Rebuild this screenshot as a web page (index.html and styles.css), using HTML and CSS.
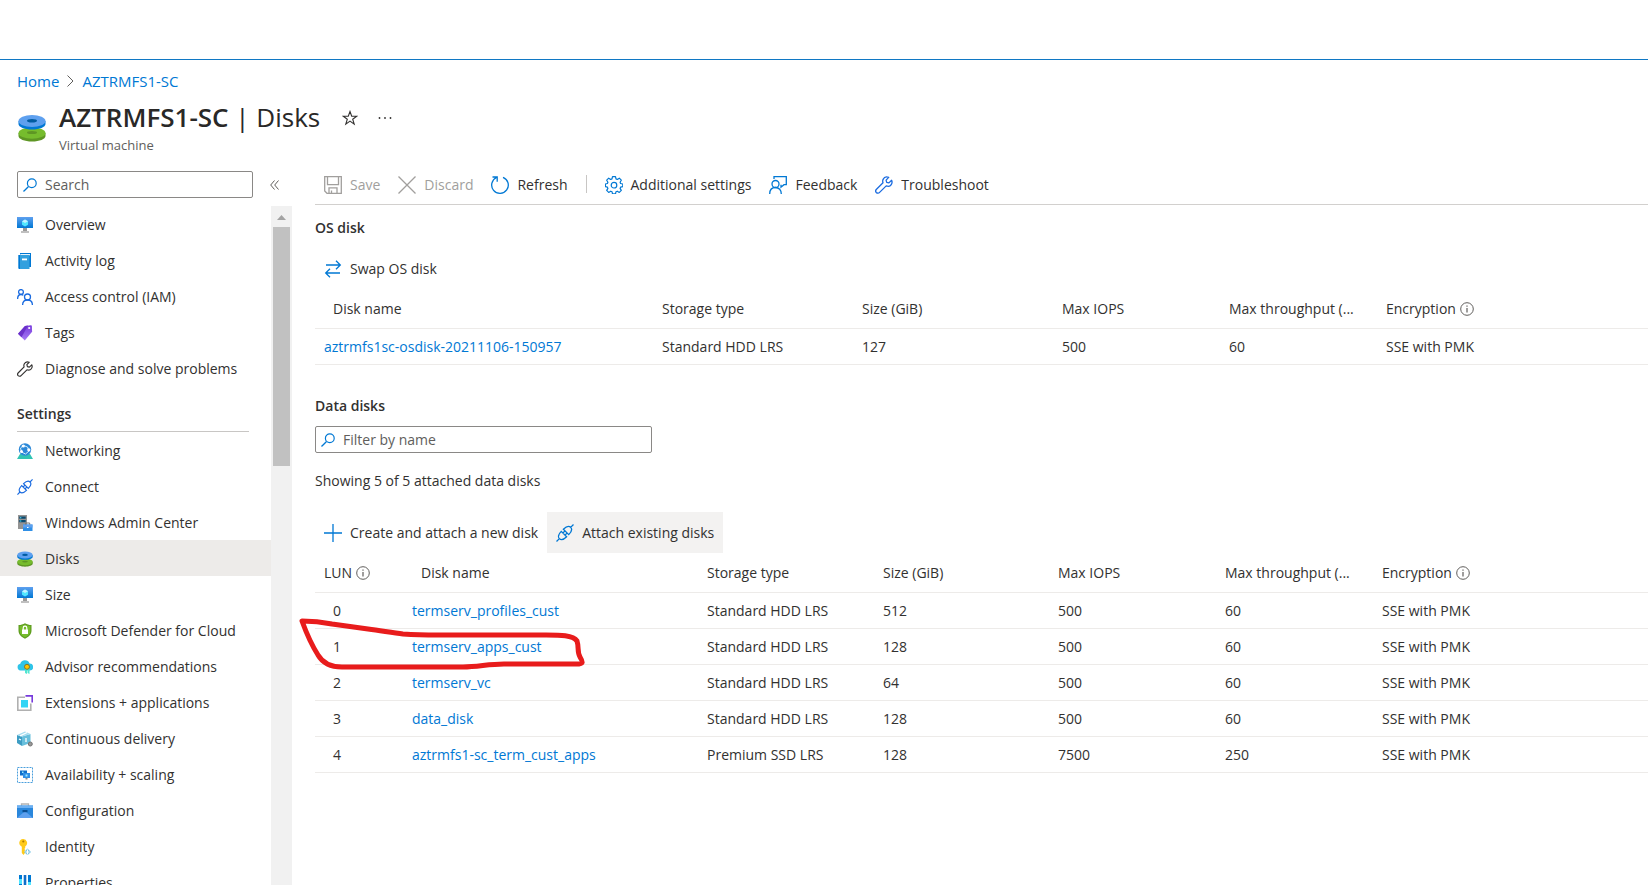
FILE: index.html
```html
<!DOCTYPE html>
<html lang="en">
<head>
  <meta charset="UTF-8">
  <meta name="viewport" content="width=device-width, initial-scale=1.0">
  <title>AZTRMFS1-SC | Disks</title>
  <link rel="stylesheet" href="styles.css">
</head>
<body>

  <!-- Shared icons -->
  <svg class="sprite" aria-hidden="true">
    <defs>
      <linearGradient id="screen" x1="0" y1="0" x2="0" y2="1">
        <stop offset="0" stop-color="#5ea0ef"/>
        <stop offset="1" stop-color="#0078d4"/>
      </linearGradient>
      <linearGradient id="purple" x1="0" y1="0" x2="0" y2="1">
        <stop offset="0" stop-color="#773adc"/>
        <stop offset="1" stop-color="#a67af4"/>
      </linearGradient>
    </defs>
    <symbol id="i-disks" viewBox="0 0 28 28">
      <path d="M0.500 19v3c0 3 6 5.500 13.500 5.500S27.500 25 27.500 22v-3z" fill="#5e9624"/>
      <ellipse cx="14" cy="19" rx="13.500" ry="5.800" fill="#76bc2d"/>
      <ellipse cx="14" cy="18.500" rx="5" ry="1.500" fill="#5e9624"/>
      <path d="M0.500 7v3c0 3 6 5.500 13.500 5.500S27.500 13 27.500 10V7z" fill="#0078d4"/>
      <ellipse cx="14" cy="7" rx="13.500" ry="6" fill="#5ea0ef"/>
      <ellipse cx="14" cy="6.800" rx="5" ry="1.800" fill="#005ba1"/>
    </symbol>
    <symbol id="i-vm" viewBox="0 0 16 16">
      <path d="M0 0h16v11H0z" fill="url(#screen)"/>
      <path d="M6 11h4v3H6z" fill="#999"/>
      <path d="M4 14h8v2H4z" fill="#c0c0c0"/>
      <path d="M8 2.500l3 1.700v3.600L8 9.500 5 7.800V4.200z" fill="#50e6ff"/>
      <path d="M8 2.500l3 1.700L8 6 5 4.200z" fill="#c3f1ff"/>
    </symbol>
    <symbol id="i-wrench" viewBox="0 0 18 18">
      <path d="M16.600 4.300l-2.700 2.600-2.200-.6-.6-2.200 2.600-2.700c-2.200-.9-4.600-.1-5.600 2-.5 1.100-.5 2.300-.1 3.300L1.500 13.200c-1 1-1 2.400-.2 3.300.9.9 2.400.9 3.300-.1l6.600-6.500c2.200.8 4.600 0 5.500-2.200.5-1.100.4-2.400-.1-3.400z" fill="none" stroke="currentColor" stroke-width="1.300" stroke-linejoin="round"/>
    </symbol>
    <symbol id="i-plug" viewBox="0 0 18 18">
      <path transform="rotate(-45 9 9)" d="M-3 9h4M17 9h4M7.500 5.200C3.500 5.200 1 6.800 1 9s2.500 3.800 6.500 3.800zM10.500 5.200C14.500 5.200 17 6.800 17 9s-2.500 3.800-6.500 3.800zM7.500 7.500h3M7.500 10.500h3" fill="none" stroke="currentColor" stroke-width="1.300"/>
    </symbol>
    <symbol id="i-search" viewBox="0 0 14 14">
      <path d="M0.500 13.500L5.300 8.700" fill="none" stroke="currentColor" stroke-width="1.300"/>
      <circle cx="8.800" cy="5.200" r="4.400" fill="none" stroke="currentColor" stroke-width="1.200"/>
    </symbol>
    <symbol id="i-info" viewBox="0 0 14 14">
      <circle cx="7" cy="7" r="6.300" fill="none" stroke="currentColor"/>
      <path d="M7 6v4.500M7 3.500v1.300" fill="none" stroke="currentColor" stroke-width="1.200"/>
    </symbol>
  </svg>

  <div class="topbar"></div>

  <nav class="breadcrumb" aria-label="Breadcrumb">
    <a href="#">Home</a>
    <svg width="7" height="12" viewBox="0 0 7 12" fill="none" stroke="#605e5c"><path d="M.5.500L6 6 .5 11.500"/></svg>
    <a href="#">AZTRMFS1-SC</a>
  </nav>

  <header class="page-header">
    <svg class="page-icon"><use href="#i-disks"/></svg>
    <div>
      <div class="title-row">
        <h1>AZTRMFS1-SC <span>| Disks</span></h1>
        <button class="icon-btn" aria-label="Favorite">
          <svg width="16" height="16" viewBox="0 0 16 16" fill="none" stroke="#323130" stroke-width="1.100"><path d="M8 1.500l1.700 4.700h5L10.700 9.200l1.500 4.900L8 11.100l-4.200 3 1.500-4.900-4-3h5z"/></svg>
        </button>
        <button class="icon-btn" aria-label="More">
          <svg width="14" height="4" viewBox="0 0 14 4" fill="#323130"><circle cx="1.500" cy="2" r=".9"/><circle cx="7" cy="2" r=".9"/><circle cx="12.500" cy="2" r=".9"/></svg>
        </button>
      </div>
      <p class="subtitle">Virtual machine</p>
    </div>
  </header>

  <div class="layout">
    <aside class="sidebar">
      <div class="sidebar-top">
        <label class="search-box">
          <svg width="14" height="14"><use href="#i-search"/></svg>
          <input type="text" placeholder="Search" aria-label="Search">
        </label>
        <button class="icon-btn" aria-label="Collapse menu">
          <svg width="9" height="10" viewBox="0 0 9 10" fill="none" stroke="#605e5c"><path d="M4.500.5L.7 5l3.800 4.500M8.500.5L4.700 5l3.800 4.500"/></svg>
        </button>
      </div>

      <div class="menu-wrap">
        <nav class="menu" aria-label="Resource menu">
          <a href="#"><svg><use href="#i-vm"/></svg>Overview</a>
          <a href="#">
            <svg viewBox="0 0 16 16"><path d="M3 0h11v14H3z" fill="#0078d4"/><path d="M3.500 1H13v1.500H3z" fill="#e6f3fb"/><path d="M1.500 2h11v14h-10a1 1 0 0 1-1-1z" fill="#32a0de"/><path d="M1.500 2h1.500v14h-.5a1 1 0 0 1-1-1z" fill="#0078d4"/><path d="M5 5.500h5v1.800H5z" fill="#fff"/></svg>
            Activity log
          </a>
          <a href="#">
            <svg viewBox="0 0 16 16" fill="none" stroke="#1a6be0" stroke-width="1.300"><circle cx="4" cy="3" r="2.400"/><path d="M.6 10c0-2.500 1.200-4.500 3.400-4.500 1 0 1.700.3 2.300.9"/><circle cx="10.500" cy="8" r="3"/><path d="M5.600 16c0-3 2-5 4.900-5s4.900 2 4.900 5"/></svg>
            Access control (IAM)
          </a>
          <a href="#">
            <svg viewBox="0 0 16 16"><path d="M8 1l6-.8.800.6.300 6L7.800 15.600 1 8.800z" fill="url(#purple)"/><path d="M8 1l3-.4L4.500 12.300 1 8.800z" fill="#6a30c9"/><circle cx="12.200" cy="3" r="1.100" fill="#fff"/></svg>
            Tags
          </a>
          <a href="#"><svg><use href="#i-wrench"/></svg>Diagnose and solve problems</a>

          <h2 class="menu-heading">Settings</h2>

          <a href="#">
            <svg viewBox="0 0 16 16"><path d="M3 11h10l3 5H0z" fill="#31c4b3"/><circle cx="8" cy="6.500" r="6.200" fill="#2b88d8"/><path d="M3.500 5l3-2.500 4 1.500 1.500 4-3.500 3-4-2z" fill="none" stroke="#d3eefc"/><circle cx="6.300" cy="3" r="1.600" fill="#fff"/><circle cx="11.800" cy="6.800" r="1.600" fill="#fff"/><circle cx="4.500" cy="8.500" r="1.500" fill="#fff"/></svg>
            Networking
          </a>
          <a href="#"><svg class="blue"><use href="#i-plug"/></svg>Connect</a>
          <a href="#">
            <svg viewBox="0 0 16 16"><path d="M1 0h9v14H1z" fill="#949494"/><path d="M2.300 1.500h6.400v2.200H2.300zM2.300 5h6.400v2.200H2.300z" fill="#0b4a70"/><path d="M3 2.200h1.300v1H3zM3 5.600h1.300v1H3z" fill="#50e6ff"/><path d="M6 9.500h9.500V16H6z" fill="#2f8fe6"/><path d="M6 9.500h9.500v3H6z" fill="#5ea0ef"/><path d="M8.700 9.500V8h4v1.500" fill="none" stroke="#777"/><path d="M10 12h1.500v1H10z" fill="#fff"/></svg>
            Windows Admin Center
          </a>
          <a href="#" class="active" aria-current="page"><svg><use href="#i-disks"/></svg>Disks</a>
          <a href="#"><svg><use href="#i-vm"/></svg>Size</a>
          <a href="#">
            <svg viewBox="0 0 16 16"><path d="M8 .2c2 1.300 4 1.700 6.500 1.800v5.500c0 4-3 6.500-6.500 8.300C4.500 14 1.500 11.500 1.500 7.500V2C4 1.900 6 1.500 8 .2z" fill="#5e9c1e"/><path d="M8 1.500c1.700 1 3.500 1.400 5.300 1.600v4.600c0 3.200-2.400 5.300-5.300 6.900-2.900-1.600-5.300-3.700-5.300-6.900V3.100C4.500 2.900 6.300 2.500 8 1.500z" fill="#76bc2d"/><path d="M5 6.500h6V11H5z" fill="#fff"/><path d="M6.200 7V5a1.800 1.800 0 0 1 3.600 0v2" fill="none" stroke="#fff" stroke-width="1.200"/></svg>
            Microsoft Defender for Cloud
          </a>
          <a href="#">
            <svg viewBox="0 0 16 16"><path d="M3.500 11.500A3.400 3.400 0 0 1 3.300 4.800 4.800 4.800 0 0 1 12.500 4.500a3.500 3.500 0 0 1 .3 7z" fill="#2fc4e8"/><path d="M8 9.500h2V15l-2-1zM10.500 9.500h2V15l-2-1z" fill="#50e6d0"/><circle cx="10" cy="7.800" r="2.500" fill="#fbc400" stroke="#806a20" stroke-width=".9"/></svg>
            Advisor recommendations
          </a>
          <a href="#">
            <svg viewBox="0 0 16 16"><path d="M8 2.200H.8v13h13V8.500" fill="none" stroke="#b0b0b0" stroke-width="1.600"/><path d="M4 5h7v7.500H4z" fill="#32d4f5"/><path d="M8.500.9h6.700v6.600" fill="none" stroke="#773adc" stroke-width="1.600"/></svg>
            Extensions + applications
          </a>
          <a href="#">
            <svg viewBox="0 0 16 16"><path d="M0 4l5 1.500V15L0 12z" fill="#3d9dc4"/><path d="M5 5.500L13.500 3v9L5 15z" fill="#67bfdc"/><path d="M0 4l8-3.500L13.500 3 5 5.500z" fill="#a5dcef"/><path d="M3 4.800L10 1.500M2 8l2 1M9 7v4" stroke="#fff" stroke-width="1.300"/><circle cx="13.300" cy="13" r="2" fill="#999" stroke="#737373"/></svg>
            Continuous delivery
          </a>
          <a href="#">
            <svg viewBox="0 0 16 16"><path d="M.5.500h15v15H.5z" fill="none" stroke="#4a9fdc" stroke-dasharray="2 1"/><path d="M3 3.500h7v5H3z" fill="#0f6fca"/><path d="M6 6h7v5H6z" fill="#2f8fe6"/><path d="M8.500 11h2v1.500h-2z" fill="#888"/><path d="M8.500 7.500h2v2h-2zM5 4.500h1.500v1.500H5z" fill="#9cebff"/></svg>
            Availability + scaling
          </a>
          <a href="#">
            <svg viewBox="0 0 16 16"><path d="M4.500 3V1h7v2" fill="none" stroke="#b3b3b3" stroke-width="1.300"/><path d="M0 2.500h16V15H0z" fill="#2a87dc"/><path d="M0 2.500h16V5H0z" fill="#6cb0f2"/><path d="M0 15l7-6h2l7 6z" fill="#5ea0ef"/><path d="M5.500 7h5v2.200h-5z" fill="#0b4f94"/></svg>
            Configuration
          </a>
          <a href="#">
            <svg viewBox="0 0 16 16"><path d="M6 0a4 4 0 0 1 2.200 7.400V9L7.300 10l1 1-1 1.200 1 1.300L6.500 16 4.800 14V7.700A4 4 0 0 1 6 0z" fill="#ffca1a"/><circle cx="6.300" cy="2.500" r="1.100" fill="#b07c00"/><path d="M10.500 9.500L14 13l-3.500 3.200L7 13z" fill="#7cc6e4"/><path d="M10.500 10.500v5M8.500 13h4" stroke="#fff"/></svg>
            Identity
          </a>
          <a href="#">
            <svg viewBox="0 0 16 16"><path d="M2 0h3v4H2zM2 9h3v7H2zM11 0h3v7h-3zM11 11h3v5h-3z" fill="#0078d4"/><path d="M2 4h3v5H2zM11 7h3v4h-3z" fill="#50e6ff"/><path d="M6.700 0h2.600v16H6.700z" fill="#0f6fca"/></svg>
            Properties
          </a>
        </nav>
        <div class="scrollbar" aria-hidden="true">
          <svg width="9" height="5" viewBox="0 0 9 5"><path d="M0 5L4.500 0 9 5z" fill="#a3a3a3"/></svg>
          <div class="scroll-thumb"></div>
        </div>
      </div>
    </aside>

    <main class="content">
      <div class="toolbar">
        <button disabled>
          <svg viewBox="0 0 18 18" fill="none" stroke="currentColor" stroke-width="1.300"><path d="M.7.700h16.600v16.600H3L.7 15zM3.500.7v8h11v-8M5 17.300v-5.500h8v5.500M7.500 17v-2.500"/></svg>
          Save
        </button>
        <button disabled>
          <svg viewBox="0 0 18 18" fill="none" stroke="currentColor" stroke-width="1.300"><path d="M.5.500l17 17M17.500.500l-17 17"/></svg>
          Discard
        </button>
        <button>
          <svg class="azure" viewBox="0 0 18 18" fill="none" stroke="currentColor" stroke-width="1.300"><path d="M12 1.300a8.300 8.300 0 1 1-6.500.2M1.500 1h4.700v4.700"/></svg>
          Refresh
        </button>
        <span class="divider"></span>
        <button>
          <svg class="azure" viewBox="0 0 18 18" fill="none" stroke="currentColor" stroke-width="1.200" stroke-linejoin="round"><path d="M7.500.7h3l.5 2.200 1.300.6 2-1.300 2 2-1.200 2 .5 1.300 2.200.5v2.600l-2.200.5-.5 1.300 1.200 2-2 2-2-1.200-1.300.5-.5 2.200h-3L7 15.700l-1.300-.5-2 1.200-2-2 1.200-2-.5-1.300-2-.5V8l2-.5.5-1.300-1.200-2 2-2 2 1.300L7 2.900z"/><circle cx="9" cy="9.200" r="2.800"/></svg>
          Additional settings
        </button>
        <button>
          <svg class="azure" viewBox="0 0 18 18" fill="none" stroke="currentColor" stroke-width="1.300"><path d="M5 3V.7h12.300v8H15l-3 2.500V8.700"/><circle cx="6.500" cy="8" r="3.500"/><path d="M.7 18c0-4 2.300-6.500 5.800-6.500s5.800 2.500 5.800 6.500"/></svg>
          Feedback
        </button>
        <button><svg class="blue"><use href="#i-wrench"/></svg>Troubleshoot</button>
      </div>

      <h2>OS disk</h2>
      <div class="commands">
        <button>
          <svg class="azure" viewBox="0 0 18 18" fill="none" stroke="currentColor" stroke-width="1.300"><path d="M2 5h14M12 .8L16.300 5 12 9.200M16 13H2M6 8.800L1.700 13 6 17.200"/></svg>
          Swap OS disk
        </button>
      </div>
      <table class="disks">
        <colgroup>
          <col class="w-os-name"><col class="w-os-type"><col class="w-os-size"><col class="w-iops"><col class="w-throughput"><col>
        </colgroup>
        <thead>
          <tr>
            <th class="indent">Disk name</th>
            <th>Storage type</th>
            <th>Size (GiB)</th>
            <th>Max IOPS</th>
            <th>Max throughput (...</th>
            <th>Encryption <svg class="info"><use href="#i-info"/></svg></th>
          </tr>
        </thead>
        <tbody>
          <tr><td><a href="#">aztrmfs1sc-osdisk-20211106-150957</a></td><td>Standard HDD LRS</td><td>127</td><td>500</td><td>60</td><td>SSE with PMK</td></tr>
        </tbody>
      </table>

      <h2 class="data-heading">Data disks</h2>
      <label class="search-box filter">
        <svg width="14" height="14"><use href="#i-search"/></svg>
        <input type="text" placeholder="Filter by name" aria-label="Filter by name">
      </label>
      <p class="showing">Showing 5 of 5 attached data disks</p>
      <div class="commands">
        <button>
          <svg class="azure" viewBox="0 0 18 18" fill="none" stroke="currentColor" stroke-width="1.300"><path d="M9 0v18M0 9h18"/></svg>
          Create and attach a new disk
        </button>
        <button class="hovered"><svg class="azure"><use href="#i-plug"/></svg>Attach existing disks</button>
      </div>
      <div class="table-wrap">
        <table class="disks">
          <colgroup>
            <col class="w-lun"><col class="w-name"><col class="w-type"><col class="w-size"><col class="w-iops"><col class="w-throughput"><col>
          </colgroup>
          <thead>
            <tr>
              <th>LUN <svg class="info"><use href="#i-info"/></svg></th>
              <th class="indent">Disk name</th>
              <th>Storage type</th>
              <th>Size (GiB)</th>
              <th>Max IOPS</th>
              <th>Max throughput (...</th>
              <th>Encryption <svg class="info"><use href="#i-info"/></svg></th>
            </tr>
          </thead>
          <tbody>
            <tr><td class="indent">0</td><td><a href="#">termserv_profiles_cust</a></td><td>Standard HDD LRS</td><td>512</td><td>500</td><td>60</td><td>SSE with PMK</td></tr>
            <tr><td class="indent">1</td><td><a href="#">termserv_apps_cust</a></td><td>Standard HDD LRS</td><td>128</td><td>500</td><td>60</td><td>SSE with PMK</td></tr>
            <tr><td class="indent">2</td><td><a href="#">termserv_vc</a></td><td>Standard HDD LRS</td><td>64</td><td>500</td><td>60</td><td>SSE with PMK</td></tr>
            <tr><td class="indent">3</td><td><a href="#">data_disk</a></td><td>Standard HDD LRS</td><td>128</td><td>500</td><td>60</td><td>SSE with PMK</td></tr>
            <tr><td class="indent">4</td><td><a href="#">aztrmfs1-sc_term_cust_apps</a></td><td>Premium SSD LRS</td><td>128</td><td>7500</td><td>250</td><td>SSE with PMK</td></tr>
          </tbody>
        </table>
        <!-- Red pen mark around LUN 1 -->
        <svg class="pen-mark" viewBox="0 0 290 56" fill="none" stroke="#e81c1c" stroke-width="5" stroke-linecap="round" stroke-linejoin="round">
          <path d="M4 5C14 5 24 6 34 8L70 13C85 15 95 17 105 18C120 19 130 19 140 19H248C262 19 275 19 279 25C281 31 279 36 282 41C285 46 286 48 278 48H206C190 48 180 51 165 51H44C32 51 24 46 20 39C13 28 8 16 4 5Z"/>
        </svg>
      </div>
    </main>
  </div>

</body>
</html>
```

FILE: styles.css
```css
* {
  box-sizing: border-box;
}
body {
  margin: 0;
  height: 100vh;
  display: flex;
  flex-direction: column;
  overflow: hidden;
  background: #fff;
  color: #323130;
  font-family: "Segoe UI", "Open Sans", "Noto Sans", sans-serif;
  font-size: 14px;
  line-height: 20px;
}
h1, h2, p {
  margin: 0;
}
a {
  color: #0078d4;
  text-decoration: none;
}
button {
  border: 0;
  background: none;
  color: inherit;
  font: inherit;
  cursor: pointer;
}
.sprite {
  position: absolute;
  width: 0;
  height: 0;
}
.azure {
  color: #0078d4;
}
.blue {
  color: #1a6be0;
}

/* Header */
.topbar {
  flex: none;
  height: 60px;
  border-bottom: 1px solid #1078c4;
}
.breadcrumb {
  display: flex;
  align-items: center;
  gap: 8px;
  padding: 11px 17px 9px;
  font-size: 15px;
}
.page-header {
  display: flex;
  align-items: center;
  gap: 13px;
  padding: 0 18px 9px;
}
.page-icon {
  width: 28px;
  height: 28px;
}
.title-row {
  display: flex;
  align-items: center;
  gap: 20px;
}
h1 {
  margin-right: 2px;
  color: #292827;
  font-size: 26px;
  font-weight: 600;
  line-height: 35px;
}
h1 span {
  font-weight: 400;
}
.subtitle {
  color: #605e5c;
  font-size: 13px;
}
.icon-btn {
  display: flex;
  padding: 0;
}

/* Sidebar */
.layout {
  flex: 1;
  display: flex;
  min-height: 0;
}
.sidebar {
  flex: none;
  width: 292px;
  display: flex;
  flex-direction: column;
  padding-top: 7px;
}
.sidebar-top {
  display: flex;
  align-items: center;
  gap: 17px;
  padding: 0 12px 8px 17px;
}
.search-box {
  flex: none;
  display: flex;
  align-items: center;
  gap: 8px;
  width: 236px;
  height: 27px;
  padding: 0 5px;
  border: 1px solid #8a8886;
  border-radius: 2px;
  color: #0078d4;
}
.search-box input {
  flex: 1;
  min-width: 0;
  padding: 0;
  border: 0;
  outline: 0;
  background: none;
  font: inherit;
}
.search-box input::placeholder {
  color: #605e5c;
  opacity: 1;
}
.menu-wrap {
  flex: 1;
  display: flex;
  min-height: 0;
}
.menu {
  flex: 1;
  overflow: hidden;
}
.menu a {
  display: flex;
  align-items: center;
  gap: 12px;
  height: 36px;
  padding: 1px 0 0 17px;
  color: #323130;
}
.menu a svg {
  flex: none;
  width: 16px;
  height: 16px;
}
.menu a.active {
  background: #edebe9;
}
.menu-heading {
  height: 46px;
  margin: 0 22px 0 17px;
  padding-top: 18px;
  border-bottom: 1px solid #c8c6c4;
  font-size: 14px;
  font-weight: 600;
}
.scrollbar {
  width: 21px;
  padding: 9px 2px 0;
  background: #f1f1f1;
  text-align: center;
  line-height: 0;
}
.scroll-thumb {
  height: 239px;
  margin-top: 7px;
  background: #c1c1c1;
}

/* Content */
.content {
  flex: 1;
  min-width: 0;
  padding-left: 23px;
}
.content h2 {
  font-size: 14px;
  font-weight: 600;
  margin: 13px 0 10px;
}
.content .data-heading {
  margin-top: 31px;
}
.toolbar, .commands {
  display: flex;
  align-items: center;
}
.toolbar {
  border-bottom: 1px solid #d2d0ce;
}
.toolbar button, .commands button {
  display: flex;
  align-items: center;
  gap: 8px;
  height: 40px;
  padding: 1px 9px 0;
  white-space: nowrap;
}
.commands button {
  height: 41px;
}
.toolbar svg, .commands svg {
  flex: none;
  width: 18px;
  height: 18px;
}
.toolbar button:disabled {
  color: #a19f9d;
  cursor: default;
}
.commands .hovered {
  background: #f3f2f1;
}
.divider {
  width: 1px;
  height: 18px;
  margin: 0 9px;
  background: #c8c6c4;
}
.filter {
  width: 337px;
}
.showing {
  margin: 18px 0 21px;
}

/* Disk tables */
.disks {
  width: 100%;
  table-layout: fixed;
  border-collapse: separate;
  border-spacing: 0;
}
.disks th, .disks td {
  height: 36px;
  padding: 0 9px;
  border-bottom: 1px solid #edebe9;
  text-align: left;
  font-weight: 400;
  white-space: nowrap;
  overflow: hidden;
  text-overflow: ellipsis;
}
.disks th {
  height: 40px;
}
.disks .indent {
  padding-left: 18px;
}
.info {
  width: 14px;
  height: 14px;
  color: #605e5c;
  vertical-align: -2px;
}
.w-os-name {
  width: 338px;
}
.w-os-type, .w-os-size {
  width: 200px;
}
.w-iops {
  width: 167px;
}
.w-throughput {
  width: 157px;
}
.w-lun {
  width: 88px;
}
.w-name {
  width: 295px;
}
.w-type {
  width: 176px;
}
.w-size {
  width: 175px;
}
.table-wrap {
  position: relative;
}
.pen-mark {
  position: absolute;
  top: 63px;
  left: -17px;
  width: 290px;
  height: 56px;
  pointer-events: none;
}
```
